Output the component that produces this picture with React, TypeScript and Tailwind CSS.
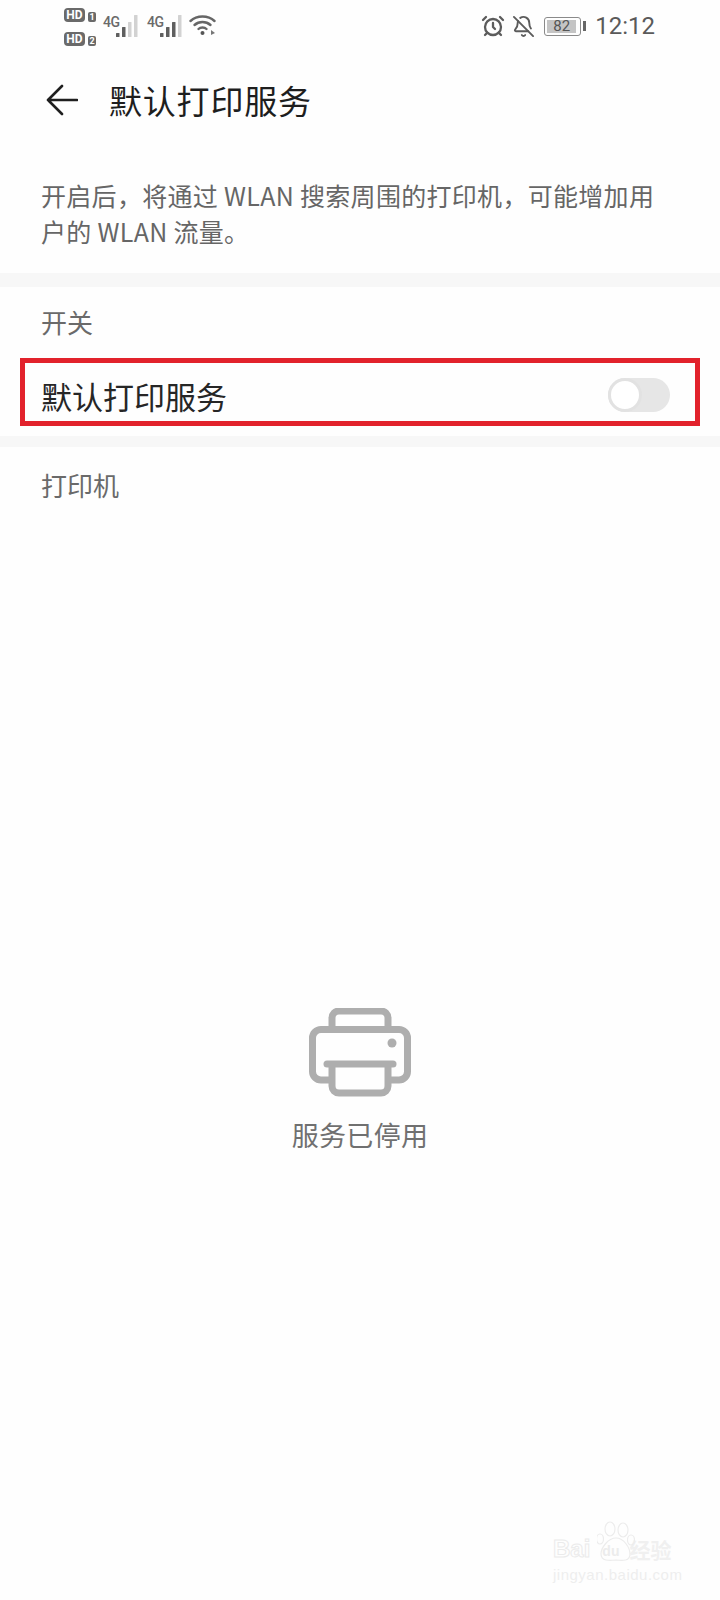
import { AlarmClock, BellOff } from "lucide-react";

const cjk = "font-['Noto_Sans_CJK_SC','Noto_Sans',sans-serif]";

// One dual-SIM badge: "HD" pill and the small slot number next to it
const SimBadge = ({ slot }: { slot: string }) => (
  <div className="flex items-end gap-[3px]">
    <div className="flex h-[14px] w-[21px] items-center justify-center rounded-[4px] bg-[#6a6a6a] font-['Roboto',sans-serif] text-[12px] font-bold leading-none text-white">
      HD
    </div>
    <div className="flex h-[10px] w-[8px] items-center justify-center rounded-[2px] bg-[#6a6a6a] font-['Roboto',sans-serif] text-[9px] font-bold leading-none text-white">
      {slot}
    </div>
  </div>
);

const Signal = ({ faded }: { faded: number }) => {
  const bars = [
    { x: 0, h: 4 },
    { x: 6, h: 10 },
    { x: 12, h: 15 },
    { x: 18, h: 22 },
  ];
  return (
    <div className="flex items-start">
      <span className="mt-[1px] w-[13px] font-['Roboto',sans-serif] text-[14px] font-medium leading-[14px] tracking-[-0.5px] text-[#6a6a6a]">
        4G
      </span>
      <svg width="22" height="22" viewBox="0 0 22 22" className="mt-[1px]">
        {bars.map((bar, i) => (
          <rect
            key={bar.x}
            x={bar.x}
            y={22 - bar.h}
            width="3.500"
            height={bar.h}
            rx="0.5"
            fill={i >= 4 - faded ? "#d2d2d2" : "#5f5f5f"}
          />
        ))}
      </svg>
    </div>
  );
};

const Wifi = () => (
  <svg width="27" height="22" viewBox="0 0 27 22" fill="none" stroke="#666" strokeWidth="2.4" strokeLinecap="round">
    <path d="M1.5 7 C8 1 19 1 25.5 7" />
    <path d="M5.5 11 C10 7 17 7 21.5 11" />
    <path d="M9.5 15 C11.5 13 15.5 13 17.5 15" />
    <circle cx="13.5" cy="19" r="2" fill="#555" stroke="none" />
    <path d="M22 16 L26 19 L22 21 Z" fill="#777" stroke="none" />
  </svg>
);

const StatusBar = () => (
  <div className="flex h-[52px] items-start justify-between pl-[64px] pr-[65px]">
    <div className="flex items-start">
      <div className="mt-[8px] flex flex-col gap-[10px]">
        <SimBadge slot="1" />
        <SimBadge slot="2" />
      </div>
      <div className="ml-[7px] mt-[14px] flex items-start gap-[9px]">
        <Signal faded={2} />
        <Signal faded={1} />
        <div className="ml-[-2px]">
          <Wifi />
        </div>
      </div>
    </div>
    <div className="mt-[14px] flex items-center text-[#5c5c5c]">
      <AlarmClock size={24} strokeWidth={2.3} />
      <BellOff size={23} strokeWidth={2} className="ml-[7px]" />
      <div className="ml-[9px] flex items-center">
        <div className="relative flex h-[19px] w-[37px] items-center justify-center rounded-[3px] border border-[#8a8a8a] p-[2px]">
          <div className="flex h-full w-[29px] items-center justify-center self-start bg-[#c4c4c4] font-['Roboto',sans-serif] text-[15px] leading-none text-[#555]">
            82
          </div>
          <div className="flex-1" />
        </div>
        <div className="ml-[2px] h-[10px] w-[3px] bg-[#666]" />
      </div>
      <span className="ml-[9px] font-['Roboto',sans-serif] text-[24px] leading-[24px] text-[#5a5a5a]">12:12</span>
    </div>
  </div>
);

const PrinterIcon = () => (
  <svg width="102" height="90" viewBox="0 0 102 90" fill="none" stroke="#aeaeae" strokeWidth="7">
    <path d="M23 21 V10 a7 7 0 0 1 7-7 H72 a7 7 0 0 1 7 7 V21" />
    <path d="M22 72 H12 a8.500 8.500 0 0 1-8.500-8.500 V30 a8.500 8.500 0 0 1 8.500-8.500 H90 a8.500 8.500 0 0 1 8.500 8.500 V63.500 a8.500 8.500 0 0 1-8.500 8.500 H80" />
    <path d="M23 55 V78 a7 7 0 0 0 7 7 H72 a7 7 0 0 0 7-7 V55" />
    <path d="M18 56 H84" strokeLinecap="round" />
    <circle cx="83" cy="35" r="4.500" fill="#aeaeae" stroke="none" />
  </svg>
);

// Faint site mark in the bottom corner, sits over the page
const Watermark = () => (
  <div className="absolute left-[553px] top-[1520px] w-[130px] select-none">
    <svg width="40" height="44" viewBox="0 0 40 44" fill="none" stroke="#ececec" strokeWidth="1.2" className="absolute left-[44px] top-0">
      <ellipse cx="13" cy="9" rx="5" ry="7" />
      <ellipse cx="26" cy="10" rx="5" ry="7" />
      <ellipse cx="3" cy="19" rx="3.500" ry="5" />
      <ellipse cx="34" cy="20" rx="3.500" ry="5" />
      <path d="M19 18 C27 18 33 28 33 34 C33 41 26 41 19 40 C12 41 4 41 4 34 C4 28 11 18 19 18 Z" />
    </svg>
    <div className="flex h-[42px] items-end">
      <span className="font-['Liberation_Sans',sans-serif] text-[24px] font-bold leading-[26px] text-transparent [-webkit-text-stroke:1px_#ebebeb]">
        Bai
      </span>
      <span className="ml-[12px] font-['Liberation_Sans',sans-serif] text-[14px] font-bold leading-[22px] text-[#ececec]">
        du
      </span>
      <span className={`ml-[10px] ${cjk} text-[21px] font-bold leading-[26px] text-[#f0f0f0]`}>经验</span>
    </div>
    <div className="mt-[5px] font-['Liberation_Sans',sans-serif] text-[15px] leading-[16px] tracking-[0.5px] text-[#eeeeee]">
      jingyan.baidu.com
    </div>
  </div>
);

export default function App() {
  return (
    <div className={`relative h-[1600px] w-[720px] overflow-hidden bg-[#fefefe] ${cjk}`}>
      <StatusBar />

      <div className="flex h-[96px] items-center pl-[46px]">
        <svg width="32" height="32" viewBox="0 0 32 32" fill="none" stroke="#1f1f1f" strokeWidth="2.600" strokeLinecap="round" strokeLinejoin="round">
          <path d="M31 16 H2 M16 2 L2 16 L16 30" />
        </svg>
        <h1 className="ml-[31px] text-[33px] font-normal leading-none tracking-[0.8px] text-[#1e1e1e]">默认打印服务</h1>
      </div>

      <p className="mt-[29px] pl-[41px] pr-[60px] text-[25px] leading-[36px] tracking-[0.3px] text-[#666666]">
        开启后，将通过 WLAN 搜索周围的打印机，可能增加用户的 WLAN 流量。
      </p>

      <div className="mt-[24px] h-[14px] bg-[#f7f7f7]" />

      <div className="flex h-[71px] items-center pb-[2px] pl-[41px] text-[26px] text-[#6a6a6a]">开关</div>

      <div className="mx-[20px] flex h-[68px] items-center justify-between border-[5px] border-[#e2222c] pl-[16px] pr-[25px] pt-[6px]">
        <span className="text-[31px] leading-none text-[#262626]">默认打印服务</span>
        <div className="h-[34px] w-[62px] rounded-full bg-[#e6e6e6]">
          <div className="h-[34px] w-[34px] rounded-full border-[3px] border-[#e2e2e2] bg-white" />
        </div>
      </div>

      <div className="mt-[10px] h-[11px] bg-[#f7f7f7]" />

      <div className="flex h-[78px] items-center pb-[4px] pl-[41px] text-[26px] text-[#6a6a6a]">打印机</div>

      <div className="mt-[483px] flex flex-col items-center">
        <PrinterIcon />
        <span className="mt-[19px] text-[27px] leading-[36px] tracking-[0.3px] text-[#707070]">服务已停用</span>
      </div>

      <Watermark />
    </div>
  );
}
